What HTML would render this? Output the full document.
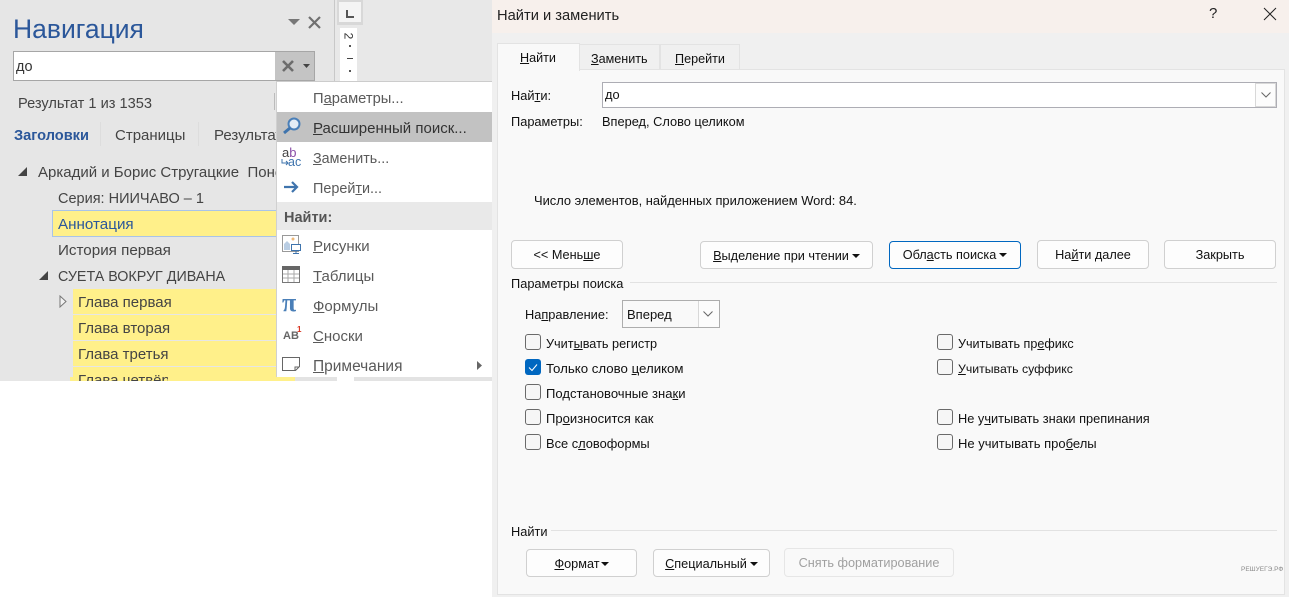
<!DOCTYPE html>
<html lang="ru"><head><meta charset="utf-8"><title>Найти и заменить</title>
<style>
html,body{margin:0;padding:0;background:#fff;width:1289px;height:597px;overflow:hidden}
body{position:relative;font-family:"Liberation Sans","DejaVu Sans",sans-serif;color:#111}
.a{position:absolute;box-sizing:border-box}
.t{position:absolute;white-space:nowrap;line-height:20px;height:20px}
.n{font-size:15px;color:#444}
.m{font-size:15px;color:#5a5a5a}
.d{font-size:12.8px;color:#111}
.y{position:absolute;background:#fff08a}
.btn{position:absolute;box-sizing:border-box;background:#fdfdfd;border:1px solid #d0d0d0;border-radius:4px;font-size:12.7px;color:#111;text-align:center;white-space:nowrap}
.arr{display:inline-block;width:0;height:0;border-left:4px solid transparent;border-right:4px solid transparent;border-top:4px solid #111;vertical-align:2px;margin-left:3px}
.cb{position:absolute;box-sizing:border-box;width:16px;height:16px;border:1px solid #6a6a6a;border-radius:3px;background:#f6f6f6}
</style></head><body>
<div class="a" style="left:0;top:0;width:492px;height:381px;background:#e6e6e6"></div>
<div class="a" style="left:334px;top:0;width:1px;height:381px;background:#c8c8c8"></div>
<div class="a" style="left:335px;top:0;width:157px;height:381px;background:#e8e8e8"></div>
<div class="a" style="left:337px;top:0;width:26px;height:25px;background:#d8d8d8"></div>
<div class="a" style="left:339px;top:2px;width:22px;height:20px;background:#f4f4f4"></div>
<div class="a" style="left:346px;top:10px;width:2px;height:8px;background:#555"></div>
<div class="a" style="left:346px;top:16px;width:8px;height:2px;background:#555"></div>
<div class="a" style="left:340px;top:28px;width:17px;height:353px;background:#fff"></div>
<div class="t" style="left:345px;top:26px;font-size:12px;color:#333;transform:rotate(90deg)">2</div>
<div class="a" style="left:349px;top:45px;width:2px;height:2px;background:#555"></div>
<div class="a" style="left:347px;top:58px;width:6px;height:1px;background:#444"></div>
<div class="a" style="left:349px;top:70px;width:2px;height:2px;background:#555"></div>

<div class="t" style="left:13px;top:14px;font-size:26.5px;line-height:30px;height:30px;color:#2b579a">Навигация</div>
<svg class="a" style="left:288px;top:19px" width="13" height="9"><path d="M0 0h12L6 6z" fill="#777"/></svg>
<svg class="a" style="left:307px;top:15px" width="15" height="15"><path d="M2 2l11 11M13 2L2 13" stroke="#707070" stroke-width="2.2" fill="none"/></svg>
<div class="a" style="left:13px;top:51px;width:302px;height:30px;background:#fff;border:1px solid #a6a6a6"></div>
<div class="a" style="left:275px;top:52px;width:39px;height:28px;background:#c4c4c4"></div>
<svg class="a" style="left:281px;top:59px" width="14" height="14"><path d="M2 2l10 10M12 2L2 12" stroke="#6c6c6c" stroke-width="2.6" fill="none"/></svg>
<svg class="a" style="left:303px;top:64px" width="8" height="5"><path d="M0 0h7L3.500 4z" fill="#444"/></svg>
<div class="t" style="left:16px;top:57px;font-size:14.500px;color:#333">до</div>
<div class="t n" style="left:18px;top:94px;font-size:14.600px">Результат 1 из 1353</div>
<div class="a" style="left:274px;top:93px;width:1px;height:17px;background:#bbb"></div>
<div class="t" style="left:14px;top:126px;font-size:14.600px;font-weight:bold;color:#2b579a">Заголовки</div>
<div class="a" style="left:100px;top:122px;width:1px;height:24px;background:#ddd"></div>
<div class="t n" style="left:115px;top:126px">Страницы</div>
<div class="a" style="left:198px;top:122px;width:1px;height:24px;background:#ddd"></div>
<div class="t n" style="left:214px;top:126px">Результаты</div>
<svg class="a" style="left:17px;top:166px" width="11" height="11"><path d="M10 1v9H1z" fill="#444"/></svg>
<div class="t n" style="left:38px;top:163px">Аркадий и Борис Стругацкие&nbsp; Понедельник</div>
<div class="t n" style="left:58px;top:189px;font-size:14.500px">Серия: НИИЧАВО – 1</div>
<div class="a" style="left:52px;top:210px;width:230px;height:27px;background:#fff08a;border:1px solid #a9c4e8"></div>
<div class="t n" style="left:58px;top:215px;color:#2b579a;font-size:15.200px">Аннотация</div>
<div class="t n" style="left:58px;top:241px;font-size:15.200px">История первая</div>
<svg class="a" style="left:38px;top:270px" width="11" height="11"><path d="M10 1v9H1z" fill="#444"/></svg>
<div class="t n" style="left:58px;top:267px;font-size:14.300px">СУЕТА ВОКРУГ ДИВАНА</div>
<svg class="a" style="left:59px;top:295px" width="9" height="13"><path d="M1 1l6 5.500L1 12z" fill="#f2f2f2" stroke="#777"/></svg>
<div class="y" style="left:73px;top:289px;width:210px;height:25px"></div>
<div class="y" style="left:73px;top:315px;width:210px;height:25px"></div>
<div class="y" style="left:73px;top:341px;width:210px;height:25px"></div>
<div class="y" style="left:73px;top:367px;width:210px;height:14px"></div>
<div class="y" style="left:70px;top:377px;width:225px;height:4px"></div>
<div class="t n" style="left:78px;top:293px">Глава первая</div>
<div class="t n" style="left:78px;top:319px">Глава вторая</div>
<div class="t n" style="left:78px;top:345px">Глава третья</div>
<div class="a" style="left:78px;top:371px;width:90px;height:10px;overflow:hidden"><div class="t n" style="left:0;top:0">Глава четвёртая</div></div>

<div class="a" style="left:276px;top:81px;width:216px;height:296px;background:#fff;border-top:1px solid #ccc;border-left:1px solid #d0d0d0"></div>
<div class="a" style="left:277px;top:112px;width:215px;height:30px;background:#c2c2c2"></div>
<div class="a" style="left:277px;top:202px;width:215px;height:28px;background:#e9e9e9"></div>
<div class="t m" style="left:313px;top:89px;font-size:14.700px">П<u>а</u>раметры...</div>
<div class="t" style="left:313px;top:119px;font-size:15px;color:#333"><u>Р</u>асширенный поиск...</div>
<div class="t m" style="left:313px;top:149px;font-size:14.300px"><u>З</u>аменить...</div>
<div class="t m" style="left:313px;top:179px;font-size:14.400px">Перей<u>т</u>и...</div>
<div class="t" style="left:284px;top:208px;font-size:14.500px;font-weight:bold;color:#555">Найти:</div>
<div class="t m" style="left:313px;top:237px"><u>Р</u>исунки</div>
<div class="t m" style="left:313px;top:267px"><u>Т</u>аблицы</div>
<div class="t m" style="left:313px;top:297px"><u>Ф</u>ормулы</div>
<div class="t m" style="left:313px;top:327px"><u>С</u>носки</div>
<div class="t m" style="left:313px;top:357px;font-size:15.500px"><u>П</u>римечания</div>
<svg class="a" style="left:282px;top:116px" width="20" height="20"><circle cx="12" cy="8" r="5.500" fill="#e4edf6" stroke="#4a7fb8" stroke-width="2"/><path d="M8 12l-6 5" stroke="#3f74ad" stroke-width="3" fill="none"/></svg>
<div class="t" style="left:282px;top:147px;font-size:13px;line-height:12px;height:12px;color:#444">a<span style="color:#8a4fa8">b</span></div>
<svg class="a" style="left:281px;top:158px" width="9" height="9"><path d="M1 1v4h6M5 3l2 2-2 2" stroke="#3f74ad" fill="none"/></svg>
<div class="t" style="left:288px;top:156px;font-size:12.500px;line-height:12px;height:12px;color:#3f74ad">ac</div>
<svg class="a" style="left:283px;top:180px" width="17" height="14"><path d="M1 7h13M9 2l5 5-5 5" stroke="#3f74ad" stroke-width="2.200" fill="none"/></svg>
<svg class="a" style="left:282px;top:235px" width="20" height="20"><rect x=".5" y=".5" width="16" height="16" fill="#fff" stroke="#999"/><path d="M2 15V9l3-3 3 3v6z" fill="#b9cde3"/><circle cx="11" cy="4" r="1.500" fill="#eeb878"/><rect x="9.500" y="9.500" width="9" height="6" fill="#fff" stroke="#3f74ad"/><path d="M14 16v2M11 18.500h6" stroke="#3f74ad"/></svg>
<svg class="a" style="left:282px;top:266px" width="18" height="18"><rect x=".5" y=".5" width="17" height="16" fill="#fff" stroke="#777"/><rect x="0" y="0" width="18" height="4" fill="#666"/><path d="M6 4v12M12 4v12M1 8h16M1 12h16" stroke="#aaa"/></svg>
<div class="t" style="left:282px;top:293px;font-family:'Liberation Serif',serif;font-size:26px;font-weight:bold;color:#4a7fb8">π</div>
<div class="t" style="left:283px;top:326px;font-size:11px;font-weight:bold;color:#666">AB</div>
<div class="t" style="left:297px;top:320px;font-size:8px;font-weight:bold;color:#d8321e">1</div>
<svg class="a" style="left:282px;top:357px" width="18" height="15"><path d="M.5.500h17v9l-4 4H.5zM17 10h-4v4" fill="#fff" stroke="#666"/></svg>
<svg class="a" style="left:477px;top:361px" width="6" height="9"><path d="M0 0l5 4.500L0 9z" fill="#666"/></svg>
<div class="a" style="left:295px;top:377px;width:197px;height:4px;background:#e3e3e3"></div>
<div class="a" style="left:337px;top:377px;width:17px;height:4px;background:#fff"></div>

<div class="a" style="left:492px;top:0;width:797px;height:597px;background:#f0f0f0"></div>
<div class="a" style="left:492px;top:0;width:797px;height:33px;background:#f7f0ec"></div>
<div class="t" style="left:497px;top:6px;font-size:14.700px;color:#222">Найти и заменить</div>
<div class="t" style="left:1209px;top:4px;font-size:15px;color:#222">?</div>
<svg class="a" style="left:1263px;top:7px" width="14" height="14"><path d="M1 1l12 12M13 1L1 13" stroke="#222" fill="none"/></svg>
<div class="a" style="left:497px;top:69px;width:788px;height:526px;background:#f9f9f9;border:1px solid #e3e3e3"></div>
<div class="a" style="left:579px;top:44px;width:81px;height:26px;background:#f0f0f0;border:1px solid #e3e3e3"></div>
<div class="a" style="left:660px;top:44px;width:80px;height:26px;background:#f0f0f0;border:1px solid #e3e3e3"></div>
<div class="a" style="left:497px;top:43px;width:83px;height:28px;background:#f9f9f9;border:1px solid #e3e3e3;border-bottom:none"></div>
<div class="t" style="left:520px;top:48px;font-size:12.600px"><u>Н</u>айти</div>
<div class="t" style="left:591px;top:49px;font-size:12.600px"><u>З</u>аменить</div>
<div class="t" style="left:675px;top:49px;font-size:12.600px"><u>П</u>ерейти</div>
<div class="t d" style="left:511px;top:86px">Най<u>т</u>и:</div>
<div class="a" style="left:602px;top:82px;width:675px;height:26px;background:#fff;border:1px solid #adadb4"></div>
<div class="a" style="left:1255px;top:83px;width:21px;height:24px;background:#fcfcfc;border:1px solid #d8d8d8"></div>
<svg class="a" style="left:1261px;top:92px" width="10" height="6"><path d="M.5.500L5 5 9.500.500" stroke="#666" fill="none"/></svg>
<div class="t d" style="left:605px;top:85px">до</div>
<div class="t d" style="left:511px;top:112px">Параметры:</div>
<div class="t d" style="left:602px;top:112px">Вперед, Слово целиком</div>
<div class="t" style="left:534px;top:191px;font-size:12.900px">Число элементов, найденных приложением Word: 84.</div>

<div class="btn" style="left:511px;top:240px;width:112px;height:29px;line-height:29px">&lt;&lt; Мень<u>ш</u>е</div>
<div class="btn" style="left:700px;top:241px;width:173px;height:28px;line-height:28px"><u>В</u>ыделение при чтении<span class="arr"></span></div>
<div class="btn" style="left:889px;top:241px;width:132px;height:28px;line-height:27px;border:1px solid #0067c0">Обл<u>а</u>сть поиска<span class="arr"></span></div>
<div class="btn" style="left:1037px;top:240px;width:112px;height:29px;line-height:29px">На<u>й</u>ти далее</div>
<div class="btn" style="left:1164px;top:240px;width:112px;height:29px;line-height:29px">Закрыть</div>

<div class="t d" style="left:511px;top:274px">Параметры поиска</div>
<div class="a" style="left:630px;top:282px;width:647px;height:1px;background:#e2e2e2"></div>
<div class="t d" style="left:525px;top:305px">На<u>п</u>равление:</div>
<div class="a" style="left:622px;top:300px;width:98px;height:28px;background:#f9f9f9;border:1px solid #adadad"></div>
<div class="a" style="left:698px;top:301px;width:21px;height:26px;background:#fcfcfc;border-left:1px solid #d8d8d8"></div>
<svg class="a" style="left:703px;top:311px" width="10" height="6"><path d="M.5.500L5 5 9.500.500" stroke="#666" fill="none"/></svg>
<div class="t" style="left:627px;top:305px;font-size:13px">Вперед</div>

<div class="cb" style="left:525px;top:334px"></div>
<div class="a" style="left:525px;top:359px;width:16px;height:16px;background:#0067c0;border-radius:3px"></div>
<svg class="a" style="left:525px;top:359px" width="16" height="16"><path d="M4 8.500l3 3 5-6" stroke="#fff" fill="none"/></svg>
<div class="cb" style="left:525px;top:384px"></div>
<div class="cb" style="left:525px;top:409px"></div>
<div class="cb" style="left:525px;top:434px"></div>
<div class="t" style="left:546px;top:334px;font-size:12.700px">Учит<u>ы</u>вать регистр</div>
<div class="t" style="left:546px;top:359px;font-size:13.250px">Только слово <u>ц</u>еликом</div>
<div class="t" style="left:546px;top:384px;font-size:13.050px">Подстановочные зна<u>к</u>и</div>
<div class="t" style="left:546px;top:409px;font-size:13.050px">Пр<u>о</u>износится как</div>
<div class="t" style="left:546px;top:434px;font-size:12.850px">Все с<u>л</u>овоформы</div>
<div class="cb" style="left:937px;top:334px"></div>
<div class="cb" style="left:937px;top:359px"></div>
<div class="cb" style="left:937px;top:409px"></div>
<div class="cb" style="left:937px;top:434px"></div>
<div class="t" style="left:958px;top:334px;font-size:12.600px">Учитывать пр<u>е</u>фикс</div>
<div class="t" style="left:958px;top:359px;font-size:12.300px"><u>У</u>читывать суффикс</div>
<div class="t" style="left:958px;top:409px;font-size:12.800px">Не у<u>ч</u>итывать знаки препинания</div>
<div class="t" style="left:958px;top:434px;font-size:13px">Не учитывать про<u>б</u>елы</div>

<div class="t d" style="left:511px;top:522px">Найти</div>
<div class="a" style="left:551px;top:530px;width:726px;height:1px;background:#e2e2e2"></div>
<div class="btn" style="left:526px;top:549px;width:111px;height:28px;line-height:28px"><u>Ф</u>ормат<span class="arr" style="margin-left:1px"></span></div>
<div class="btn" style="left:653px;top:549px;width:117px;height:28px;line-height:28px"><u>С</u>пециальный<span class="arr"></span></div>
<div class="btn" style="left:784px;top:548px;width:170px;height:29px;line-height:29px;background:#f9f9f9;border-color:#e6e6e6;color:#a0a0a0">Снять форматирование</div>
<div class="t" style="left:1241px;top:560px;font-size:6.500px;color:#8a8a8a">РЕШУЕГЭ.РФ</div>
</body></html>
